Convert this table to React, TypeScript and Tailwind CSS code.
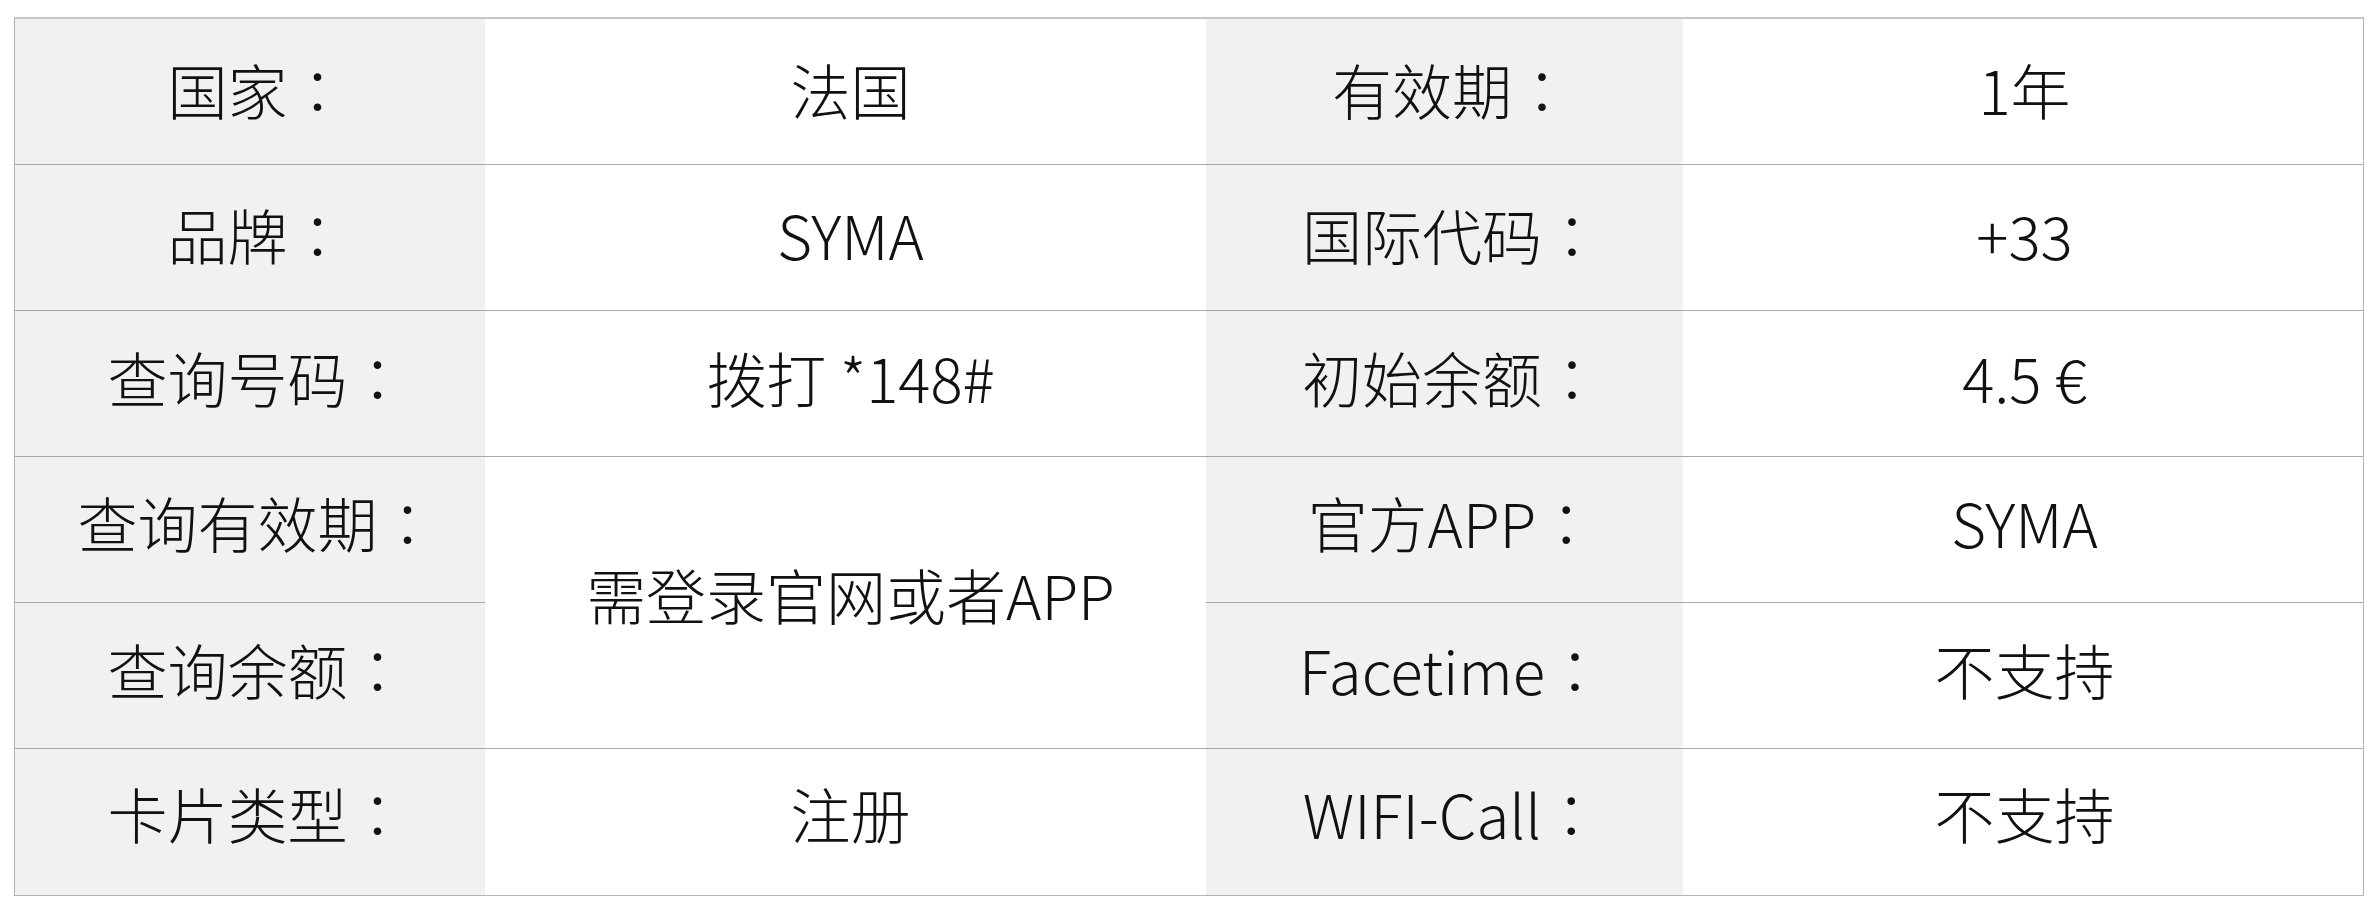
const rows = [
    { k1: "国家", v1: "法国", k2: "有效期", v2: "1年", pb: "pb-[5px]" },
    { k1: "品牌", v1: "SYMA", k2: "国际代码", v2: "+33", pb: "pb-[8px]" },
    { k1: "查询号码", v1: "拨打 *148#", k2: "初始余额", v2: "4.5 €", pb: "pb-[13px]" },
    { k1: "查询有效期", v1: null, k2: "官方APP", v2: "SYMA", pb: "pb-[16px]" },
    { k1: "查询余额", v1: null, k2: "Facetime", v2: "不支持", pb: "pb-[14px]" },
    { k1: "卡片类型", v1: "注册", k2: "WIFI-Call", v2: "不支持", pb: "pb-[18px]" },
];

const Cell = ({ children, gray, last, className = "" }) => (
    <div
        className={`flex items-center justify-center ${gray ? "bg-[#f1f1f1]" : "bg-white"} ${last ? "" : "border-b border-[#a9a9a9]"} ${className}`}
    >
        {children}
    </div>
);

// centred full-width colon like the TC/JP glyph
const Label = ({ text }) => (
    <span>
        {text}
        <span style={{ fontFamily: '"Noto Sans CJK TC", sans-serif' }}>：</span>
    </span>
);

export default function App() {
    return (
        <div className="w-[2375px] h-[907px] bg-white pl-[14px] pt-[17px]">
            <div
                className="grid grid-cols-[470px_721px_477px_680px] grid-rows-[repeat(6,146px)] border border-[#b4b4b4] border-t-2 border-t-[#c6c6c6] w-[2350px] text-[60px] font-light text-[#111]"
                style={{ fontFamily: '"Noto Sans CJK SC", "Noto Sans", sans-serif' }}
            >
                {rows.map((r, i) => {
                    const last = i === rows.length - 1;
                    return [
                        <Cell key={`a${i}`} gray last={last} className={`pl-[15px] ${r.pb}`}><Label text={r.k1} /></Cell>,
                        i === 3 ? (
                            <Cell key={`b${i}`} className="row-span-2 pl-[10px] pb-[18px]">需登录官网或者APP</Cell>
                        ) : i === 4 ? null : (
                            <Cell key={`b${i}`} last={last} className={`pl-[10px] ${r.pb}`}>{r.v1}</Cell>
                        ),
                        <Cell key={`c${i}`} gray last={last} className={`pl-[15px] ${r.pb}`}><Label text={r.k2} /></Cell>,
                        <Cell key={`d${i}`} last={last} className={`pl-[3px] ${r.pb}`}>{r.v2}</Cell>,
                    ];
                })}
            </div>
        </div>
    );
}
